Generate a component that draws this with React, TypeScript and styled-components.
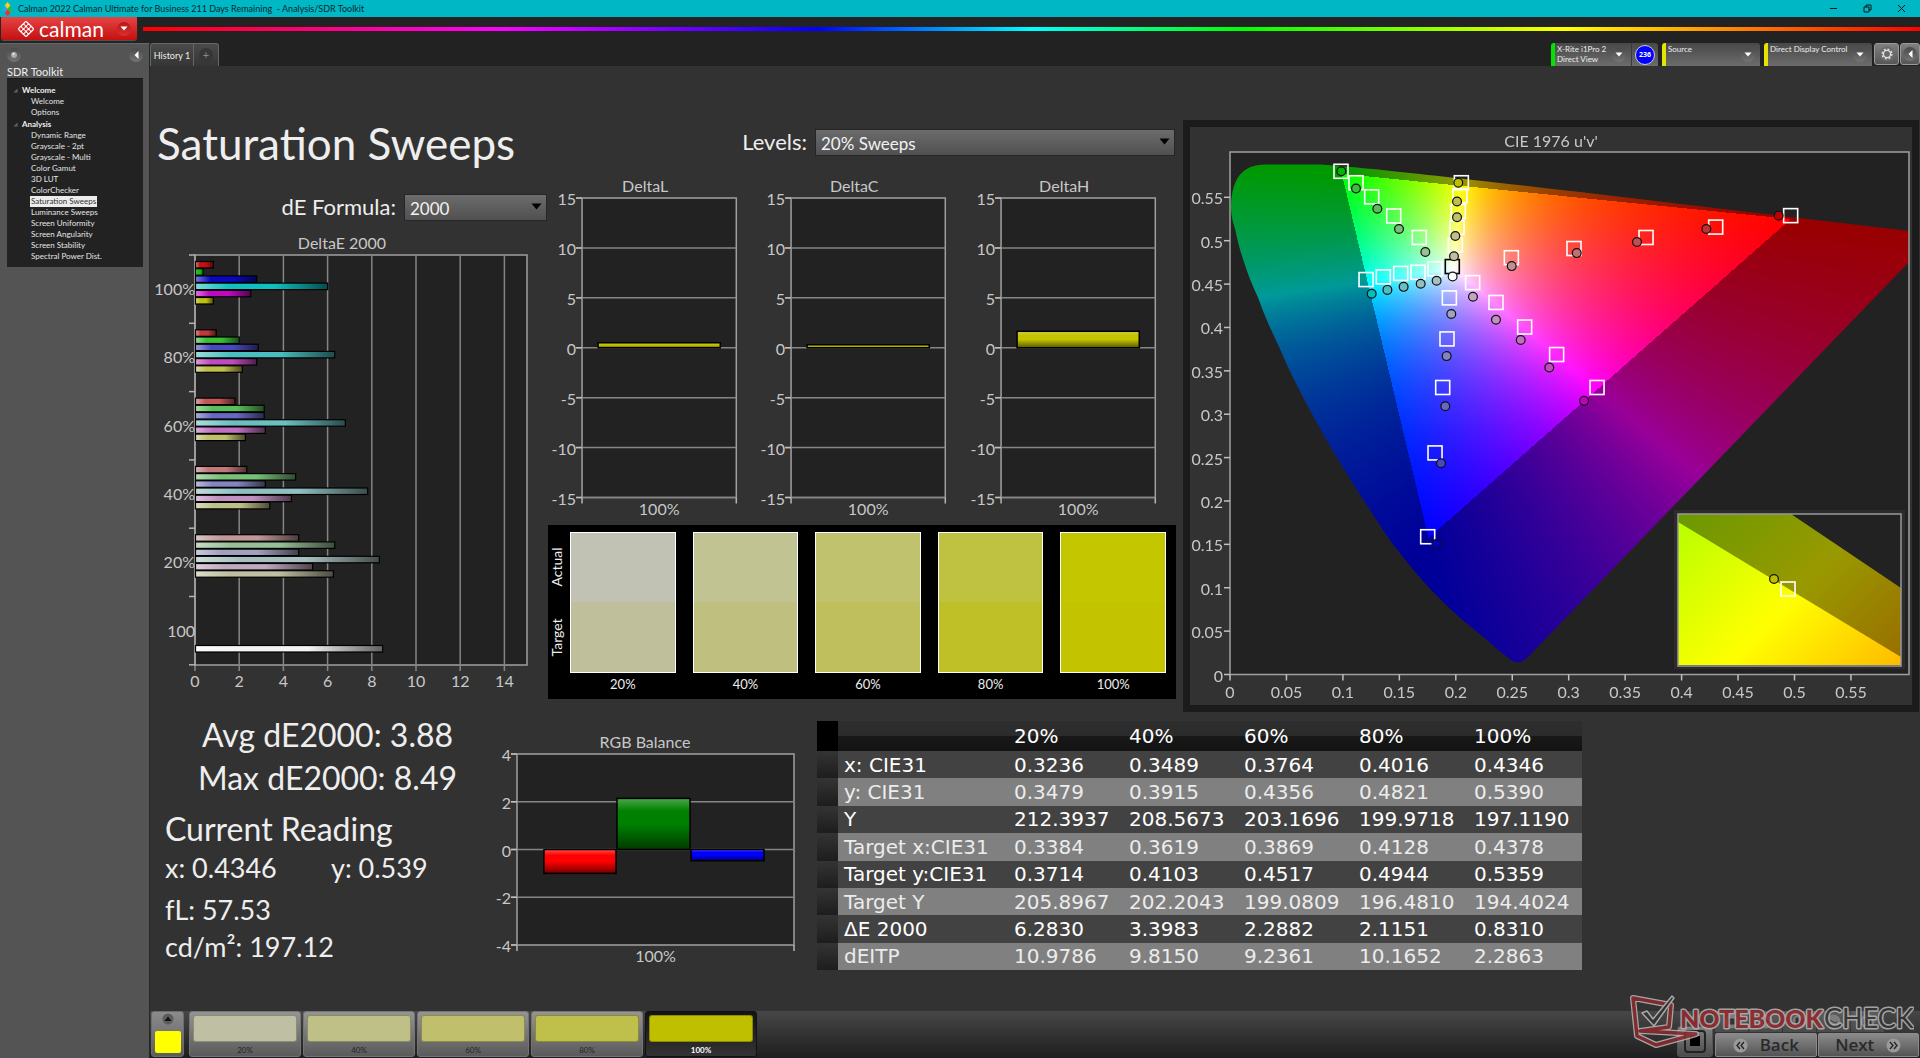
import React, { useLayoutEffect, useRef } from 'react';
import styled, { createGlobalStyle } from 'styled-components';

const UI = '"Lato", "Open Sans", sans-serif';
const SYSTEM = '"Noto Sans", "Open Sans", sans-serif';
const WIDE = '"DejaVu Sans", "Noto Sans", sans-serif';

const GlobalStyle = createGlobalStyle`
  *, *::before, *::after { box-sizing: border-box; }
  body { margin: 0; background: #323232; color: #eee; font-family: ${UI}; }
  h1, h2, p { margin: 0; font-weight: 400; }
  button, select { font-family: inherit; color: inherit; }
`;

/* ---------- data ---------- */

const LEVELS = ['20%', '40%', '60%', '80%', '100%'];

const TREE = [
  { name: 'Welcome', items: ['Welcome', 'Options'] },
  {
    name: 'Analysis',
    items: [
      'Dynamic Range', 'Grayscale - 2pt', 'Grayscale - Multi', 'Color Gamut', '3D LUT', 'ColorChecker',
      'Saturation Sweeps', 'Luminance Sweeps', 'Screen Uniformity', 'Screen Angularity', 'Screen Stability',
      'Spectral Power Dist.',
    ],
  },
];

type Bar = [number, string];
const DELTA_E: { label: string; bars: Bar[] }[] = [
  { label: '100%', bars: [[0.81, '#c01010'], [0.35, '#10c010'], [2.77, '#0808c4'], [5.98, '#10bfbf'], [2.5, '#c008c0'], [0.81, '#bfbf10']] },
  { label: '80%', bars: [[0.94, '#c03838'], [1.98, '#38c038'], [2.84, '#4848c0'], [6.3, '#4bbfbf'], [2.77, '#c04bc0'], [2.12, '#bfbf4b']] },
  { label: '60%', bars: [[1.79, '#c05858'], [3.11, '#58c058'], [3.11, '#6868c0'], [6.78, '#6cbfbf'], [3.16, '#c070c0'], [2.26, '#bfbf6c']] },
  { label: '40%', bars: [[2.32, '#c07878'], [4.53, '#78c078'], [3.16, '#8484c0'], [7.79, '#90bfbf'], [4.34, '#c090c0'], [3.36, '#bfbf88']] },
  { label: '20%', bars: [[4.67, '#c09898'], [6.3, '#98c098'], [4.67, '#a0a0c0'], [8.32, '#a8bfbf'], [5.3, '#c0a8c0'], [6.24, '#bfbfa3']] },
  { label: '100', bars: [[8.47, '#f4f4f4']] },
];

const SWATCHES = [
  { level: '20%', actual: '#c1c2b4', target: '#bfbf9b' },
  { level: '40%', actual: '#c1c392', target: '#bfbf80' },
  { level: '60%', actual: '#c0c26d', target: '#bfbf5d' },
  { level: '80%', actual: '#bfc140', target: '#bfbf28' },
  { level: '100%', actual: '#c4c600', target: '#c3c300' },
];

const STRIP = ['#bfbfa3', '#bfbf88', '#bfbf6c', '#bfbf4b', '#bfbf00'];

const TABLE: [string, string[]][] = [
  ['x: CIE31', ['0.3236', '0.3489', '0.3764', '0.4016', '0.4346']],
  ['y: CIE31', ['0.3479', '0.3915', '0.4356', '0.4821', '0.5390']],
  ['Y', ['212.3937', '208.5673', '203.1696', '199.9718', '197.1190']],
  ['Target x:CIE31', ['0.3384', '0.3619', '0.3869', '0.4128', '0.4378']],
  ['Target y:CIE31', ['0.3714', '0.4103', '0.4517', '0.4944', '0.5359']],
  ['Target Y', ['205.8967', '202.2043', '199.0809', '196.4810', '194.4024']],
  ['ΔE 2000', ['6.2830', '3.3983', '2.2882', '2.1151', '0.8310']],
  ['dEITP', ['10.9786', '9.8150', '9.2361', '10.1652', '2.2863']],
];

const TARGETS = [
  [0.0983, 0.58], [0.1116, 0.5668], [0.1255, 0.5505], [0.145, 0.5285], [0.1677, 0.5037],
  [0.2049, 0.5668], [0.2037, 0.5518], [0.2022, 0.5337], [0.2011, 0.5152], [0.1996, 0.4949],
  [0.1205, 0.4552], [0.1358, 0.4583], [0.1512, 0.4623], [0.1665, 0.4636], [0.1816, 0.4676],
  [0.1751, 0.1588], [0.1816, 0.2554], [0.1884, 0.3308], [0.1922, 0.3868], [0.1943, 0.4341],
  [0.2149, 0.4517], [0.2356, 0.4288], [0.261, 0.4005], [0.2893, 0.3688], [0.3251, 0.3308],
  [0.2492, 0.4804], [0.3047, 0.491], [0.3685, 0.5037], [0.4302, 0.5157], [0.4966, 0.5289],
];

const MEASURED: [number, number, string][] = [
  [0.0986, 0.58, '#00b400'], [0.1116, 0.5602, '#38c038'], [0.1305, 0.5368, '#58c058'], [0.1497, 0.5135, '#78c078'], [0.173, 0.487, '#98c098'],
  [0.2022, 0.5668, '#bfbf00'], [0.2011, 0.5452, '#bfbf4b'], [0.2011, 0.5271, '#bfbf6c'], [0.1996, 0.5055, '#bfbf88'], [0.1984, 0.4821, '#bfbfa3'],
  [0.1255, 0.4389, '#00bfbf'], [0.1394, 0.4433, '#4bbfbf'], [0.1538, 0.4468, '#6cbfbf'], [0.1689, 0.4504, '#90bfbf'], [0.183, 0.4539, '#a8bfbf'],
  [0.1828, 0.1504, '#0000c0'], [0.1869, 0.2435, '#4848c0'], [0.1907, 0.3092, '#6868c0'], [0.1919, 0.367, '#8484c0'], [0.196, 0.4155, '#a0a0c0'],
  [0.2152, 0.4354, '#c0a8c0'], [0.2356, 0.4089, '#c090c0'], [0.2575, 0.3855, '#c070c0'], [0.2828, 0.3538, '#c04bc0'], [0.3136, 0.3154, '#c000c0'],
  [0.2495, 0.4707, '#c09090'], [0.3071, 0.4857, '#c07070'], [0.3605, 0.4985, '#c05050'], [0.4219, 0.5135, '#c03030'], [0.486, 0.5289, '#c00000'],
  [0.1972, 0.4588, '#ffffff'],
];

/* ---------- window frame ---------- */

const Window = styled.div`
  display: flex;
  flex-direction: column;
  min-height: 100vh;
  background: #222;
`;

const TitleBar = styled.header`
  display: flex;
  align-items: center;
  height: 17px;
  padding: 0 2px;
  background: #00b7c5;
  color: #06282c;
  font-size: 9px;
  line-height: 17px;
`;

const TitleText = styled.span`
  flex: 1;
  padding-left: 5px;
  white-space: pre;
`;

const WindowButton = styled.button`
  width: 34px;
  height: 17px;
  padding: 0;
  border: 0;
  background: none;
  display: grid;
  place-items: center;
`;

const BrandRow = styled.div`
  display: flex;
  align-items: flex-start;
  gap: 6px;
  height: 26px;
  padding-left: 1px;
`;

const BrandButton = styled.button`
  display: flex;
  align-items: center;
  width: 136px;
  height: 23px;
  padding: 0 6px 0 16px;
  border: 0;
  border-radius: 0 0 3px 3px;
  background: linear-gradient(#e64444, #c41010);
  box-shadow: 0 1px 1px #555;
  color: #fff;
`;

const BrandName = styled.span`
  flex: 1;
  padding-left: 4px;
  text-align: left;
  font-size: 21px;
  line-height: 20px;
`;

const Spectrum = styled.div`
  flex: 1;
  height: 4px;
  margin-top: 10px;
  background: linear-gradient(90deg, #f00, #f0f 20%, #00f 38%, #0ff 50%, #0f0 62%, #ff0 80%, #f00);
`;

const Knob = styled.span<{ $red?: boolean }>`
  display: grid;
  place-items: center;
  width: 14px;
  height: 14px;
  border-radius: 50%;
  background: ${(p) => (p.$red ? 'linear-gradient(#b81818, #d83030)' : 'linear-gradient(#4a4a4a, #747474)')};
`;

const Body = styled.div`
  display: flex;
  flex: 1;
`;

/* ---------- sidebar ---------- */

const Sidebar = styled.aside`
  width: 150px;
  flex: none;
  padding: 4px 6px 0 7px;
  background: #545454;
  border-top: 1px solid #666;
  border-right: 1px solid #262626;
`;

const SideTools = styled.div`
  display: flex;
  justify-content: space-between;
  height: 17px;
`;

const IconButton = styled.button`
  padding: 0;
  border: 0;
  background: none;
  display: block;
  height: 14px;
`;

const SideTitle = styled.h2`
  font-size: 11px;
  line-height: 13px;
`;

const Tree = styled.nav`
  height: 189px;
  padding: 5px 0 0 6px;
  background: #222;
  border-top: 1px solid #1a1a1a;
`;

const Branch = styled.div`
  display: flex;
  align-items: center;
  gap: 4px;
  height: 12px;
  font-size: 8px;
  font-weight: 700;
`;

const Leaf = styled.a<{ $active: boolean }>`
  display: block;
  width: max-content;
  height: 11px;
  margin-left: 17px;
  padding: 0 1px;
  font-size: 8px;
  line-height: 11px;
  text-decoration: none;
  color: ${(p) => (p.$active ? '#333' : '#e4e4e4')};
  background: ${(p) => (p.$active ? '#ececec' : 'none')};
`;

/* ---------- top tabs ---------- */

const Main = styled.main`
  flex: 1;
  min-width: 0;
  display: flex;
  flex-direction: column;
  background: #323232;
`;

const TabBar = styled.div`
  display: flex;
  align-items: flex-end;
  height: 23px;
  background: #222;
`;

const HistoryTab = styled.button`
  width: 44px;
  height: 23px;
  padding: 0;
  border: 1px solid #666;
  border-bottom: 0;
  border-radius: 3px 0 0 0;
  background: linear-gradient(#4a4a4a, #353535);
  font-size: 9px;
`;

const AddTab = styled.button`
  display: grid;
  place-items: center;
  width: 25px;
  height: 23px;
  padding: 0;
  border: 1px solid #666;
  border-bottom: 0;
  border-left: 0;
  border-radius: 0 3px 0 0;
  background: linear-gradient(#4a4a4a, #353535);
  color: #888;
`;

const AddMark = styled.span`
  width: 14px;
  height: 14px;
  border-radius: 50%;
  background: #363636;
  font-size: 11px;
  line-height: 13px;
`;

const Devices = styled.div`
  display: flex;
  gap: 4px;
  margin-left: auto;
`;

const Device = styled.div<{ $mark: string; $width: number }>`
  display: flex;
  width: ${(p) => p.$width}px;
  height: 23px;
  border-left: 4px solid ${(p) => p.$mark};
  border-radius: 3px 3px 0 0;
  background: linear-gradient(#484848, #6c6c6c);
`;

const DeviceButton = styled.button`
  flex: 1;
  display: flex;
  justify-content: space-between;
  align-items: center;
  height: 23px;
  padding: 0 5px 0 2px;
  border: 0;
  background: none;
  text-align: left;
  font-size: 8px;
  line-height: 10px;
`;

const DeviceName = styled.span`
  align-self: flex-start;
  padding-top: 1px;
  white-space: pre;
`;

const MeterCount = styled.span`
  display: grid;
  place-items: center;
  width: 27px;
  border-left: 1px solid #3a3a3a;
`;

const CountBadge = styled.span`
  width: 20px;
  height: 20px;
  border: 1px solid #ccd;
  border-radius: 50%;
  background: #00f;
  font: 700 7px/18px ${SYSTEM};
  text-align: center;
  color: #fff;
`;

const ToolPair = styled.div`
  display: flex;
  gap: 1px;
  margin-left: -2px;
`;

const ToolButton = styled.button<{ $width: number }>`
  display: grid;
  place-items: center;
  width: ${(p) => p.$width}px;
  height: 22px;
  padding: 0;
  border: 1px solid #999;
  border-radius: 3px;
  background: linear-gradient(#808080, #565656);
`;

/* ---------- workspace ---------- */

const Workspace = styled.section`
  flex: 1;
  padding-top: 54px;
`;

const Upper = styled.div`
  display: grid;
  grid-template-columns: minmax(0, 398fr) minmax(0, 628fr) minmax(0, 744fr);
  align-items: start;
`;

const Lower = styled.div`
  display: grid;
  grid-template-columns: minmax(0, 340fr) minmax(0, 327fr) minmax(0, 765fr) minmax(0, 338fr);
  align-items: start;
`;

const Column = styled.div`
  display: flex;
  flex-direction: column;
`;

const PageTitle = styled.h1`
  height: 50px;
  padding-left: 7px;
  font-size: 44px;
  line-height: 46px;
  white-space: nowrap;
`;

const Field = styled.div<{ $top: number }>`
  display: flex;
  justify-content: flex-end;
  align-items: center;
  gap: 8px;
  height: 27px;
  margin-top: ${(p) => p.$top}px;
  padding-right: 1px;
  font-size: 22px;
`;

const SelectBox = styled.div<{ $width: number }>`
  position: relative;
  width: ${(p) => p.$width}px;
  height: 27px;
`;

const Select = styled.select`
  appearance: none;
  width: 100%;
  height: 27px;
  padding: 3px 24px 0 5px;
  border: 1px solid #262626;
  border-radius: 0;
  background: linear-gradient(#6c6c6c, #505050);
  font-size: 17px;
  color: #f2f2f2;
`;

const SelectArrow = styled.svg`
  position: absolute;
  right: 5px;
  top: 10px;
  pointer-events: none;
`;

const Plot = styled.svg`
  display: block;
  width: 100%;
  height: auto;
  font-family: ${UI};
  font-size: 16px;
  fill: #c8c8c8;
`;

const DeltaEWrap = styled.div`
  margin-top: 10px;
`;

const DeltaRow = styled.div`
  display: grid;
  grid-template-columns: repeat(3, minmax(0, 1fr));
  margin-top: 20px;
`;

const ComparePanel = styled.div`
  display: flex;
  gap: 12px;
  height: 174px;
  padding: 7px 10px 0 0;
  background: #000;
`;

const SideLabels = styled.div`
  display: flex;
  flex-direction: column-reverse;
  width: 10px;
  height: 141px;
`;

const SideLabel = styled.span`
  flex: 1;
  writing-mode: vertical-rl;
  transform: rotate(180deg);
  text-align: center;
  font-size: 14px;
  line-height: 18px;
`;

const SwatchGrid = styled.div`
  flex: 1;
  display: grid;
  grid-template-columns: repeat(5, minmax(0, 1fr));
  column-gap: 17px;
`;

const Swatch = styled.figure<{ $actual: string; $target: string }>`
  margin: 0;
  text-align: center;
  font-size: 13px;
  line-height: 23px;
  &::before {
    content: '';
    display: block;
    height: 141px;
    border: 1px solid #fff;
    background: linear-gradient(${(p) => p.$actual} 50%, ${(p) => p.$target} 50%);
  }
`;

const CiePanel = styled.div`
  display: grid;
  margin: 0 1px 0 7px;
  border: 7px solid #1b1b1b;
`;

const CieCanvas = styled.canvas`
  grid-area: 1 / 1;
  width: 100%;
  height: auto;
  display: block;
`;

const CieOverlay = styled(Plot)`
  grid-area: 1 / 1;
`;

const Readings = styled.div`
  padding: 1px 0 0 15px;
`;

const Stat = styled.p`
  text-align: center;
  font-size: 32px;
  line-height: 43px;
  white-space: nowrap;
`;

const ReadingTitle = styled.h2`
  margin-top: 10px;
  font-size: 32px;
  line-height: 39px;
`;

const ReadingRow = styled.p<{ $height: number }>`
  display: flex;
  font-size: 27px;
  line-height: ${(p) => p.$height}px;
`;

const Reading = styled.span`
  flex: none;
  width: 166px;
  white-space: nowrap;
`;

const BalanceWrap = styled.div`
  margin-top: 22px;
`;

const DataTable = styled.table`
  width: 100%;
  height: 249px;
  margin-top: 9px;
  border-collapse: collapse;
  table-layout: fixed;
  font: 20px/24px ${WIDE};
  color: #fff;
`;

const HeadRow = styled.tr`
  height: 30px;
  background: linear-gradient(#2e2e2e, #2b2b2b 49%, #181818 51%, #131313);
`;

const DataRow = styled.tr<{ $odd: boolean }>`
  background: ${(p) => (p.$odd ? '#808080' : '#424242')};
  color: ${(p) => (p.$odd ? '#ececec' : '#fff')};
`;

const Corner = styled.td`
  width: 21px;
  padding: 0;
  background: #000;
`;

const RowHandle = styled.td`
  width: 21px;
  padding: 0;
  background: linear-gradient(#343434, #1d1d1d);
`;

const Cell = styled.td`
  padding: 0;
  white-space: nowrap;
  text-align: left;
`;

const RowHead = styled.th`
  padding: 0 0 0 6px;
  width: 176px;
  font-weight: 400;
  white-space: nowrap;
  text-align: left;
`;

const ColHead = styled.th`
  width: 115px;
  padding: 0;
  font-weight: 400;
  text-align: left;
  &:last-child { width: auto; }
`;

/* ---------- bottom bar ---------- */

const Footer = styled.footer`
  position: relative;
  display: flex;
  align-items: stretch;
  height: 47px;
  padding: 0 1px 1px;
  background: linear-gradient(#474747, #1e1e1e);
`;

const PatternButton = styled.button`
  display: flex;
  flex-direction: column;
  align-items: center;
  justify-content: space-between;
  width: 33px;
  padding: 1px 0 3px;
  margin-right: 5px;
  border: 1px solid #6c6c6c;
  border-radius: 3px;
  background: linear-gradient(#8c8c8c, #5c5c5c);
`;

const PatternColor = styled.span`
  width: 26px;
  height: 22px;
  border-radius: 2px;
  background: #ff0;
`;

const LevelButton = styled.button<{ $active: boolean }>`
  width: 112px;
  margin-right: 2px;
  padding: 3px 3px 0;
  border: 1px solid ${(p) => (p.$active ? '#111' : '#747474')};
  border-radius: 3px;
  background: ${(p) => (p.$active ? 'linear-gradient(#141414, #333)' : 'linear-gradient(#949494, #5a5a5a)')};
  font-size: 8px;
  line-height: 16px;
  font-weight: ${(p) => (p.$active ? 700 : 400)};
  color: ${(p) => (p.$active ? '#fff' : '#262626')};
`;

const LevelColor = styled.span<{ $color: string }>`
  display: block;
  height: 27px;
  border: 1px solid #0004;
  border-radius: 3px;
  background: ${(p) => p.$color};
`;

const Transport = styled.div`
  display: flex;
  align-items: flex-end;
  gap: 2px;
  margin-left: auto;
`;

const StopButton = styled.button`
  display: grid;
  place-items: center;
  width: 36px;
  height: 31px;
  padding: 0;
  border: 1px solid #555;
  border-radius: 3px;
  background: linear-gradient(#808080, #4c4c4c);
`;

const TransportGrid = styled.div`
  display: grid;
  grid-template-rows: 21px 24px;
  gap: 1px;
  width: 204px;
`;

const MiniRow = styled.div`
  display: flex;
  gap: 1px;
`;

const MiniButton = styled.button<{ $off?: boolean }>`
  display: grid;
  place-items: center;
  width: 33px;
  height: 21px;
  padding: 0;
  border: 0;
  background: ${(p) => (p.$off ? 'none' : 'linear-gradient(#5c5c5c, #4a4a4a)')};
`;

const NavRow = styled.div`
  display: flex;
  gap: 1px;
`;

const NavButton = styled.button`
  flex: 1;
  display: flex;
  align-items: center;
  justify-content: center;
  gap: 12px;
  padding: 0;
  border: 1px solid #8a8a8a;
  border-radius: 2px;
  background: linear-gradient(#8a8a8a, #545454);
  font: 600 17px/20px "Open Sans", ${SYSTEM};
  color: #2a2a2a;
`;

const Watermark = styled.svg`
  position: absolute;
  right: 6px;
  bottom: 9px;
  pointer-events: none;
  font-family: ${UI};
  font-size: 27px;
`;

/* ---------- small drawings ---------- */

const Down = ({ color = '#fff' }: { color?: string }) => (
  <svg width="8" height="5" viewBox="0 0 8 5"><path d="M0.5 0.5h7L4 4.5z" fill={color} /></svg>
);

const Left = () => (
  <svg width="5" height="8" viewBox="0 0 5 8"><path d="M4.5 0v8L0.5 4z" fill="#fff" /></svg>
);

const AppMark = () => (
  <svg width="11" height="14" viewBox="0 0 11 14">
    <path d="M5.5 0L8.500 3.500 5.500 7 2.500 3.500z" fill="#f3d21c" />
    <path d="M8 4l3 3.500-3 3.500-3-3.500z" fill="#33b54a" />
    <path d="M3 4l3 3.500L3 11 0 7.500z" fill="#27a7e5" />
    <path d="M5.500 7.500L8.500 11l-3 3-3-3z" fill="#e2363a" />
  </svg>
);

const CalmanMark = () => (
  <svg width="18" height="18" viewBox="0 0 18 18">
    <g transform="rotate(45 9 9)">
      <rect x="2.800" y="2.800" width="12.400" height="12.400" rx="2" fill="#fff" />
      {[0, 1, 2].map((r) => [0, 1, 2].map((c) => (
        <rect key={`${r}${c}`} x={4 + c * 3.6} y={4 + r * 3.6} width="2.800" height="2.800" rx="1" fill="#d42c2c" />
      )))}
    </g>
  </svg>
);

const Gear = () => (
  <svg width="16" height="16" viewBox="0 0 16 16">
    <circle cx="8" cy="8" r="7.500" fill="#6a6a6a" />
    <circle cx="8" cy="8" r="3.600" fill="none" stroke="#e2e2e2" strokeWidth="1.400" />
    <circle cx="8" cy="8" r="4.900" fill="none" stroke="#e2e2e2" strokeWidth="1.400" strokeDasharray="1.920 1.920" />
  </svg>
);

const Chevrons = ({ flip }: { flip?: boolean }) => (
  <svg width="15" height="15" viewBox="0 0 15 15">
    <circle cx="7.500" cy="7.500" r="7" fill="#9a9a9a" />
    <path
      d="M7 4L4 7.500 7 11M11 4L8 7.500 11 11"
      transform={flip ? 'rotate(180 7.5 7.5)' : undefined}
      fill="none" stroke="#222" strokeWidth="1.300"
    />
  </svg>
);

const TRANSPORT_ICONS = ['M5 5h5v5H5z', 'M5 4l6 3.500L5 11z', 'M4 4h2v7H4zM11 4v7L7 7.500z', 'M3 7.500C5 4 8 11 11 7.500', 'M4 5l4 2.500L4 10zM9 5h2v5H9z'];

/* ---------- charts ---------- */

const GRID = '#858585';

const ShadeDefs = () => (
  <defs>
    <linearGradient id="shadeH">
      <stop offset="0" stopColor="#fff" stopOpacity="0.45" />
      <stop offset="0.25" stopColor="#fff" stopOpacity="0" />
      <stop offset="0.6" stopColor="#000" stopOpacity="0" />
      <stop offset="1" stopColor="#000" stopOpacity="0.6" />
    </linearGradient>
    <linearGradient id="shadeV" x1="0" y1="0" x2="0" y2="1">
      <stop offset="0" stopColor="#fff" stopOpacity="0.3" />
      <stop offset="0.25" stopColor="#fff" stopOpacity="0" />
      <stop offset="0.5" stopColor="#000" stopOpacity="0" />
      <stop offset="1" stopColor="#000" stopOpacity="0.55" />
    </linearGradient>
  </defs>
);

function DeltaEChart() {
  const left = 45;
  const top = 25;
  const slot = 68.3;
  const unit = 22.1;
  const bottom = 435;
  return (
    <Plot viewBox="0 0 398 470" role="img" aria-label="DeltaE 2000">
      <ShadeDefs />
      <text x="192" y="19" textAnchor="middle">DeltaE 2000</text>
      <rect x={left} y={top} width="332" height={bottom - top} fill="#222" stroke="#a0a0a0" strokeWidth="1.500" />
      {[2, 4, 6, 8, 10, 12, 14].map((n) => (
        <line key={n} x1={left + n * unit} x2={left + n * unit} y1={top} y2={bottom + 6} stroke={GRID} strokeWidth="1.500" />
      ))}
      <line x1={left} x2={left} y1={top} y2={bottom + 6} stroke="#b4b4b4" />
      {[0, 2, 4, 6, 8, 10, 12, 14].map((n) => (
        <text key={n} x={left + n * unit} y={bottom + 22} textAnchor="middle">{n}</text>
      ))}
      {[0, 1, 2, 3, 4, 5, 6].map((k) => (
        <line key={k} x1={left - 6} x2={left} y1={top + k * slot} y2={top + k * slot} stroke="#b4b4b4" strokeWidth="1.500" />
      ))}
      {DELTA_E.map((g, k) => (
        <g key={k}>
          <text x={left} y={top + k * slot + 40} textAnchor="end">{g.label}</text>
          {g.bars.map(([v, color], i) => {
            const y = top + k * slot + (g.bars.length === 1 ? 49 : 6.5 + i * 7.2);
            return (
              <g key={i}>
                <rect x={left + 0.5} y={y} width={v * unit} height="6.500" fill={color} />
                <rect x={left + 0.5} y={y} width={v * unit} height="6.500" fill="url(#shadeH)" stroke="#000" strokeWidth="1.200" />
              </g>
            );
          })}
        </g>
      ))}
    </Plot>
  );
}

type ColumnChartProps = {
  title: string;
  size: [number, number];
  box: [number, number, number, number];
  titleX: number;
  max: number;
  step: number;
  columns: { value: number; x: number; width: number; color: string }[];
};

function ColumnChart({ title, size, box, titleX, max, step, columns }: ColumnChartProps) {
  const [x, y, w, h] = box;
  const toY = (v: number) => y + ((max - v) / (2 * max)) * h;
  const ticks: number[] = [];
  for (let v = max; v >= -max; v -= step) ticks.push(v);
  return (
    <Plot viewBox={`0 0 ${size[0]} ${size[1]}`} role="img" aria-label={title}>
      <ShadeDefs />
      <text x={titleX} y={y - 6} textAnchor="middle">{title}</text>
      <rect x={x} y={y} width={w} height={h} fill="#222" stroke="#a0a0a0" strokeWidth="1.500" />
      {ticks.map((v) => (
        <g key={v}>
          <line x1={x - 6} x2={x + w} y1={toY(v)} y2={toY(v)} stroke={GRID} strokeWidth="1.500" />
          <line x1={x - 6} x2={x} y1={toY(v)} y2={toY(v)} stroke="#c0c0c0" strokeWidth="1.500" />
          <text x={x - 6} y={toY(v) + 7} textAnchor="end">{v}</text>
        </g>
      ))}
      <path d={`M${x} ${y + h}v6M${x + w} ${y + h}v6`} stroke="#b4b4b4" strokeWidth="1.500" />
      {columns.map((c) => {
        const a = Math.min(toY(c.value), toY(0));
        const d = Math.abs(toY(c.value) - toY(0));
        return (
          <g key={c.x}>
            <rect x={c.x} y={a} width={c.width} height={d} fill={c.color} />
            <rect x={c.x} y={a} width={c.width} height={d} fill="url(#shadeV)" stroke="#000" strokeWidth="1.500" />
          </g>
        );
      })}
      <text x={x + w / 2} y={y + h + 17} textAnchor="middle">100%</text>
    </Plot>
  );
}

/* CIE 1976 diagram geometry, in chart units */
const CIE_W = 722;
const CIE_H = 578;
const ORIGIN_X = 40;
const ORIGIN_Y = 547.5;
const UNIT_U = 1129;
const UNIT_V = 867.6;
const px = (u: number) => ORIGIN_X + u * UNIT_U;
const py = (v: number) => ORIGIN_Y - v * UNIT_V;

const LOCUS =
  'M41 79C42 50 53 38 75 37.5L130 37.5C180 41 240 48 390 65L719 104L719 135L336 532C330 536 325 537 320 532' +
  'C306 522 296 512 283 501.600C269 491 256 478 243 465C229 450 216 434 203 417.400C188 396 174 374 160 352' +
  'C145 328 131 304 118 279.600C108 261 98 241 90 222C82 205 74 188 68 170.500C62 158 57 145 53 132C49 121 47 111 45 101.600C42 94 41 86 41 79Z';

/* Display P3 primaries in u'v' */
const GAMUT = [[0.0986, 0.5777], [0.4964, 0.5256], [0.1754, 0.1579]];

const side = (p: number[], a: number[], b: number[]) => (p[0] - b[0]) * (a[1] - b[1]) - (a[0] - b[0]) * (p[1] - b[1]);

function inGamut(u: number, v: number) {
  const p = [u, v];
  const s = [side(p, GAMUT[0], GAMUT[1]), side(p, GAMUT[1], GAMUT[2]), side(p, GAMUT[2], GAMUT[0])];
  return s.every((n) => n >= 0) || s.every((n) => n <= 0);
}

function chromaColor(u: number, v: number) {
  const d = 6 * u - 16 * v + 12;
  const x = (9 * u) / d;
  const y = Math.max((4 * v) / d, 0.0001);
  const X = x / y;
  const Z = (1 - x - y) / y;
  const rgb = [
    2.4935 * X - 0.9314 - 0.4027 * Z,
    -0.8295 * X + 1.7627 + 0.0236 * Z,
    0.0358 * X - 0.0762 + 0.9569 * Z,
  ].map((n) => Math.max(n, 0));
  const top = Math.max(...rgb);
  return rgb.map((n) => n / top);
}

function CieChart() {
  const ref = useRef<HTMLCanvasElement>(null);

  useLayoutEffect(() => {
    const ctx = ref.current?.getContext('2d');
    if (!ctx) return;
    const image = ctx.createImageData(CIE_W, CIE_H);
    for (let j = 0; j < CIE_H; j++) {
      for (let i = 0; i < CIE_W; i++) {
        const u = (i - ORIGIN_X) / UNIT_U;
        const v = (ORIGIN_Y - j) / UNIT_V;
        if (u < 0 || v < 0) continue;
        const gain = inGamut(u, v) ? 255 : 153;
        const k = (j * CIE_W + i) * 4;
        chromaColor(u, v).forEach((c, n) => { image.data[k + n] = c * gain; });
        image.data[k + 3] = 255;
      }
    }
    ctx.putImageData(image, 0, 0);
    ctx.globalCompositeOperation = 'destination-in';
    ctx.fill(new Path2D(LOCUS));
    ctx.globalCompositeOperation = 'destination-over';
    ctx.fillStyle = '#222';
    ctx.fillRect(ORIGIN_X, 25, 679, 522);
    ctx.globalCompositeOperation = 'source-over';
  }, []);

  const us = [0, 0.05, 0.1, 0.15, 0.2, 0.25, 0.3, 0.35, 0.4, 0.45, 0.5, 0.55];

  return (
    <CiePanel>
      <CieCanvas ref={ref} width={CIE_W} height={CIE_H} />
      <CieOverlay viewBox={`0 0 ${CIE_W} ${CIE_H}`} role="img" aria-label="CIE 1976 u'v'">
        <defs>
          <linearGradient id="insetBright" gradientUnits="userSpaceOnUse" x1="487" y1="394" x2="680" y2="586">
            <stop offset="0" stopColor="#b8ff00" />
            <stop offset="0.5" stopColor="#ff0" />
            <stop offset="1" stopColor="#ffb400" />
          </linearGradient>
          <linearGradient id="insetDim" gradientUnits="userSpaceOnUse" x1="487" y1="394" x2="680" y2="586">
            <stop offset="0" stopColor="#6c9900" />
            <stop offset="0.5" stopColor="#999900" />
            <stop offset="1" stopColor="#996800" />
          </linearGradient>
        </defs>
        <text x="361" y="20" textAnchor="middle">CIE 1976 u'v'</text>
        <rect x={ORIGIN_X} y="25" width="679" height="522.500" fill="none" stroke="#a0a0a0" strokeWidth="1.500" />
        {us.map((n) => (
          <g key={n}>
            <line x1={px(n)} x2={px(n)} y1={ORIGIN_Y} y2={ORIGIN_Y + 6} stroke="#c0c0c0" strokeWidth="1.500" />
            <text x={px(n)} y={ORIGIN_Y + 23} textAnchor="middle">{n}</text>
            <line x1={ORIGIN_X - 6} x2={ORIGIN_X} y1={py(n)} y2={py(n)} stroke="#c0c0c0" strokeWidth="1.500" />
            <text x={ORIGIN_X - 7} y={py(n) + 7} textAnchor="end">{n}</text>
          </g>
        ))}
        {TARGETS.map(([u, v]) => (
          <rect key={`${u}${v}`} x={px(u) - 7} y={py(v) - 7} width="14" height="14" fill="none" stroke="#fff" strokeWidth="1.600" />
        ))}
        <rect x={px(0.1969) - 7} y={py(0.4702) - 7} width="14" height="14" fill="none" stroke="#000" strokeWidth="1.600" />
        {MEASURED.map(([u, v, c]) => (
          <circle key={`${u}${v}`} cx={px(u)} cy={py(v)} r="4.400" fill={c} stroke="#111" strokeWidth="1.200" />
        ))}
        <rect x="484" y="383" width="231" height="159" fill="#2c2c2c" />
        <rect x="488" y="387" width="223" height="151" fill="#222" />
        <path d="M488 387H601L711 461V538H488Z" fill="url(#insetDim)" />
        <path d="M488 395L711 530V538H488Z" fill="url(#insetBright)" />
        <rect x="488" y="387" width="223" height="152" fill="none" stroke="#999" strokeWidth="1.500" />
        <circle cx="584" cy="452" r="4.400" fill="#bfbf00" stroke="#111" strokeWidth="1.200" />
        <rect x="591" y="455" width="14" height="14" fill="none" stroke="#fff" strokeWidth="1.600" />
      </CieOverlay>
    </CiePanel>
  );
}

/* ---------- page ---------- */

const Arrow = () => (
  <SelectArrow width="11" height="7" viewBox="0 0 11 7"><path d="M0.500 0.500h10L5.500 6.500z" fill="#000" /></SelectArrow>
);

const DELTAS: [string, number][] = [['DeltaL', 0.5], ['DeltaC', 0.3], ['DeltaH', 1.65]];

export default function App() {
  return (
    <>
      <GlobalStyle />
      <Window>
        <TitleBar>
          <AppMark />
          <TitleText>Calman 2022 Calman Ultimate for Business 211 Days Remaining  - Analysis/SDR Toolkit</TitleText>
          <WindowButton aria-label="Minimize">
            <svg width="9" height="9" viewBox="0 0 9 9"><path d="M1 4.500h7" stroke="#111" /></svg>
          </WindowButton>
          <WindowButton aria-label="Restore">
            <svg width="9" height="9" viewBox="0 0 9 9"><path d="M1 3h5v5H1zM3 3V1h5v5H6" fill="none" stroke="#111" /></svg>
          </WindowButton>
          <WindowButton aria-label="Close">
            <svg width="9" height="9" viewBox="0 0 9 9"><path d="M1 1l7 7M8 1L1 8" stroke="#111" /></svg>
          </WindowButton>
        </TitleBar>

        <BrandRow>
          <BrandButton>
            <CalmanMark />
            <BrandName>calman</BrandName>
            <Knob $red><Down /></Knob>
          </BrandButton>
          <Spectrum />
        </BrandRow>

        <Body>
          <Sidebar>
            <SideTools>
              <IconButton aria-label="Pin panel">
                <Knob>
                  <svg width="8" height="8" viewBox="0 0 8 8"><circle cx="4" cy="4" r="3" fill="#aaa" /><circle cx="3.500" cy="3" r="1.300" fill="#ddd" /></svg>
                </Knob>
              </IconButton>
              <IconButton aria-label="Collapse panel"><Knob><Left /></Knob></IconButton>
            </SideTools>
            <SideTitle>SDR Toolkit</SideTitle>
            <Tree>
              {TREE.map((b) => (
                <div key={b.name}>
                  <Branch>
                    <svg width="5" height="5" viewBox="0 0 5 5"><path d="M4.500 0.500v4h-4z" fill="#666" /></svg>
                    {b.name}
                  </Branch>
                  {b.items.map((item) => (
                    <Leaf key={item} href="#" $active={item === 'Saturation Sweeps'}>{item}</Leaf>
                  ))}
                </div>
              ))}
            </Tree>
          </Sidebar>

          <Main>
            <TabBar>
              <HistoryTab>History 1</HistoryTab>
              <AddTab aria-label="Add history"><AddMark>+</AddMark></AddTab>
              <Devices>
                <Device $mark="#00e400" $width={107}>
                  <DeviceButton><DeviceName>{'X-Rite i1Pro 2\nDirect View'}</DeviceName><Knob><Down /></Knob></DeviceButton>
                  <MeterCount><CountBadge>236</CountBadge></MeterCount>
                </Device>
                <Device $mark="#e4e400" $width={98}>
                  <DeviceButton><DeviceName>Source</DeviceName><Knob><Down /></Knob></DeviceButton>
                </Device>
                <Device $mark="#e4e400" $width={108}>
                  <DeviceButton><DeviceName>Direct Display Control</DeviceName><Knob><Down /></Knob></DeviceButton>
                </Device>
                <ToolPair>
                  <ToolButton $width={25} aria-label="Settings"><Gear /></ToolButton>
                  <ToolButton $width={20} aria-label="Collapse"><Knob><Left /></Knob></ToolButton>
                </ToolPair>
              </Devices>
            </TabBar>

            <Workspace>
              <Upper>
                <Column>
                  <PageTitle>Saturation Sweeps</PageTitle>
                  <Field $top={23}>
                    <label htmlFor="formula">dE Formula:</label>
                    <SelectBox $width={143}>
                      <Select id="formula" defaultValue="2000"><option>2000</option></Select>
                      <Arrow />
                    </SelectBox>
                  </Field>
                  <DeltaEWrap><DeltaEChart /></DeltaEWrap>
                </Column>

                <Column>
                  <Field $top={8}>
                    <label htmlFor="levels">Levels:</label>
                    <SelectBox $width={360}>
                      <Select id="levels" defaultValue="20% Sweeps"><option>20% Sweeps</option></Select>
                      <Arrow />
                    </SelectBox>
                  </Field>
                  <DeltaRow>
                    {DELTAS.map(([name, value]) => (
                      <ColumnChart
                        key={name} title={name} size={[209, 349]} box={[34, 23, 154, 299]} titleX={97} max={15} step={5}
                        columns={[{ value, x: 50, width: 122, color: '#c3c300' }]}
                      />
                    ))}
                  </DeltaRow>
                  <ComparePanel>
                    <SideLabels><SideLabel>Target</SideLabel><SideLabel>Actual</SideLabel></SideLabels>
                    <SwatchGrid>
                      {SWATCHES.map((s) => (
                        <Swatch key={s.level} $actual={s.actual} $target={s.target}>{s.level}</Swatch>
                      ))}
                    </SwatchGrid>
                  </ComparePanel>
                </Column>

                <CieChart />
              </Upper>

              <Lower>
                <Readings>
                  <Stat>Avg dE2000: 3.88</Stat>
                  <Stat>Max dE2000: 8.49</Stat>
                  <ReadingTitle>Current Reading</ReadingTitle>
                  <ReadingRow $height={40}><Reading>x: 0.4346</Reading><Reading>y: 0.539</Reading></ReadingRow>
                  <ReadingRow $height={44}>fL: 57.53</ReadingRow>
                  <ReadingRow $height={30}>cd/m²: 197.12</ReadingRow>
                </Readings>
                <BalanceWrap>
                  <ColumnChart
                    title="RGB Balance" size={[327, 240]} box={[27, 20, 277, 191]} titleX={155} max={4} step={2}
                    columns={[
                      { value: -1, x: 54, width: 72, color: '#f00' },
                      { value: 2.14, x: 127, width: 73, color: '#008000' },
                      { value: -0.47, x: 201, width: 73, color: '#00f' },
                    ]}
                  />
                </BalanceWrap>
                <DataTable>
                  <thead>
                    <HeadRow>
                      <Corner />
                      <RowHead as="td" />
                      {LEVELS.map((l) => <ColHead key={l} scope="col">{l}</ColHead>)}
                    </HeadRow>
                  </thead>
                  <tbody>
                    {TABLE.map(([name, values], i) => (
                      <DataRow key={name} $odd={i % 2 === 1}>
                        <RowHandle />
                        <RowHead scope="row">{name}</RowHead>
                        {values.map((v, n) => <Cell key={n}>{v}</Cell>)}
                      </DataRow>
                    ))}
                  </tbody>
                </DataTable>
              </Lower>
            </Workspace>

            <Footer>
              <PatternButton aria-label="Pattern">
                <svg width="12" height="12" viewBox="0 0 12 12"><circle cx="6" cy="6" r="5.500" fill="#5c5c5c" /><path d="M2.500 8L6 3.500 9.500 8z" fill="#111" /></svg>
                <PatternColor />
              </PatternButton>
              {LEVELS.map((l, i) => (
                <LevelButton key={l} $active={i === 4}>
                  <LevelColor $color={STRIP[i]} />
                  {l}
                </LevelButton>
              ))}
              <Transport>
                <StopButton aria-label="Stop">
                  <svg width="26" height="26" viewBox="0 0 26 26"><rect x="3" y="2" width="20" height="21" rx="3" fill="none" stroke="#222" strokeWidth="2" /><rect x="8" y="7" width="10" height="10" fill="#000" /></svg>
                </StopButton>
                <TransportGrid>
                  <MiniRow>
                    {TRANSPORT_ICONS.map((d, i) => (
                      <MiniButton key={i} aria-label={`Transport ${i + 1}`}>
                        <svg width="15" height="15" viewBox="0 0 15 15"><circle cx="7.500" cy="7.500" r="7" fill="#7c7c7c" /><path d={d} fill={i === 3 ? 'none' : '#333'} stroke="#333" /></svg>
                      </MiniButton>
                    ))}
                    <MiniButton $off aria-label="Record">
                      <svg width="15" height="15" viewBox="0 0 15 15"><circle cx="7.500" cy="7.500" r="6" fill="#333" /></svg>
                    </MiniButton>
                  </MiniRow>
                  <NavRow>
                    <NavButton><Chevrons />Back</NavButton>
                    <NavButton>Next<Chevrons flip /></NavButton>
                  </NavRow>
                </TransportGrid>
              </Transport>
              <Watermark width="286" height="56" viewBox="0 0 286 56" role="img" aria-label="NotebookCheck">
                <g fill="none" strokeLinejoin="round" strokeLinecap="round" opacity="0.85">
                  <path d="M5 5L43 12L41 34L12 38L68 41L28 52L9 43Z" stroke="#bbb" strokeWidth="6" />
                  <path d="M5 5L43 12L41 34L12 38L68 41L28 52L9 43Z" stroke="#8c2a2e" strokeWidth="3.500" />
                  <path d="M14 20L19 18L25 26L44 3L46 5L26 33Z" fill="#333" stroke="#bbb" strokeWidth="1.500" />
                </g>
                <g stroke="#b5b5b5" strokeWidth="3" paintOrder="stroke" strokeLinejoin="round" opacity="0.85">
                  <text x="195" y="35" fontSize="25" fontWeight="900" textAnchor="end" fill="#96282d">NOTEBOOK</text>
                  <text x="196" y="35" fill="#333">CHECK</text>
                </g>
              </Watermark>
            </Footer>
          </Main>
        </Body>
      </Window>
    </>
  );
}
